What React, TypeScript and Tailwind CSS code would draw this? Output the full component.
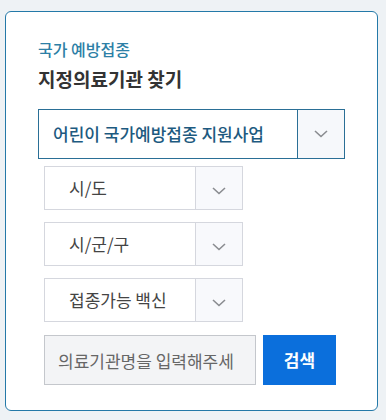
import { useState } from 'react';

const font = { fontFamily: '"Noto Sans CJK KR", "Noto Sans", sans-serif' };

function Chevron() {
  return (
    <svg width="14" height="8" viewBox="0 0 14 8" fill="none">
      <path d="M1 1l6 5.5L13 1" stroke="#8a8c90" strokeWidth="1.6" />
    </svg>
  );
}

interface SelectBoxProps {
  label: string;
  primary?: boolean;
}

function SelectBox({ label, primary }: SelectBoxProps) {
  if (primary) {
    return (
      <div className="flex w-[307px] h-[50px] border border-[#2a6f96]">
        <div className="flex-grow flex items-center pl-[14px] text-[17px] text-[#1d5a80] font-medium">
          {label}
        </div>
        <div className="w-[47px] flex items-center justify-center border-l border-[#2a6f96] bg-[#f6f8fb]">
          <Chevron />
        </div>
      </div>
    );
  }
  return (
    <div className="flex w-[199px] h-[44px] ml-[6px] border border-[#d5d7de]">
      <div className="flex-grow flex items-center pl-[24px] text-[17px] text-[#444]">{label}</div>
      <div className="w-[47px] flex items-center justify-center pt-[6px] border-l border-[#d5d7de] bg-[#f8f9fc]">
        <Chevron />
      </div>
    </div>
  );
}

export default function App() {
  const [query, setQuery] = useState('');

  return (
    <div className="w-[386px] h-[420px] bg-[#eef2f5] pt-[11px] pl-[5px]" style={font}>
      <div className="w-[373px] h-[400px] bg-white border border-[#2479a8] rounded-md pl-[32px] pt-[26px]">
        <p className="text-[16px] leading-[23px] font-medium text-[#2d7fa6]">국가 예방접종</p>
        <h2 className="mt-[5px] text-[19px] leading-[26px] font-bold text-[#333]">지정의료기관 찾기</h2>

        <div className="mt-[17px]">
          <SelectBox label="어린이 국가예방접종 지원사업" primary />
        </div>
        <div className="mt-[7px] flex flex-col gap-[12px]">
          <SelectBox label="시/도" />
          <SelectBox label="시/군/구" />
          <SelectBox label="접종가능 백신" />
        </div>

        <div className="mt-[13px] ml-[6px] flex">
          <input
            type="text"
            value={query}
            onChange={(e) => setQuery(e.target.value)}
            placeholder="의료기관명을 입력해주세요"
            className="w-[212px] h-[50px] bg-[#f3f4f6] border border-[#c4c7cc] pl-[13px] pr-[22px] text-[17px] text-[#333] placeholder:text-[#666] focus:outline-none"
          />
          <button className="ml-[7px] w-[73px] h-[50px] bg-[#0b6fdc] text-white text-[17px] font-bold">
            검색
          </button>
        </div>
      </div>
    </div>
  );
}
